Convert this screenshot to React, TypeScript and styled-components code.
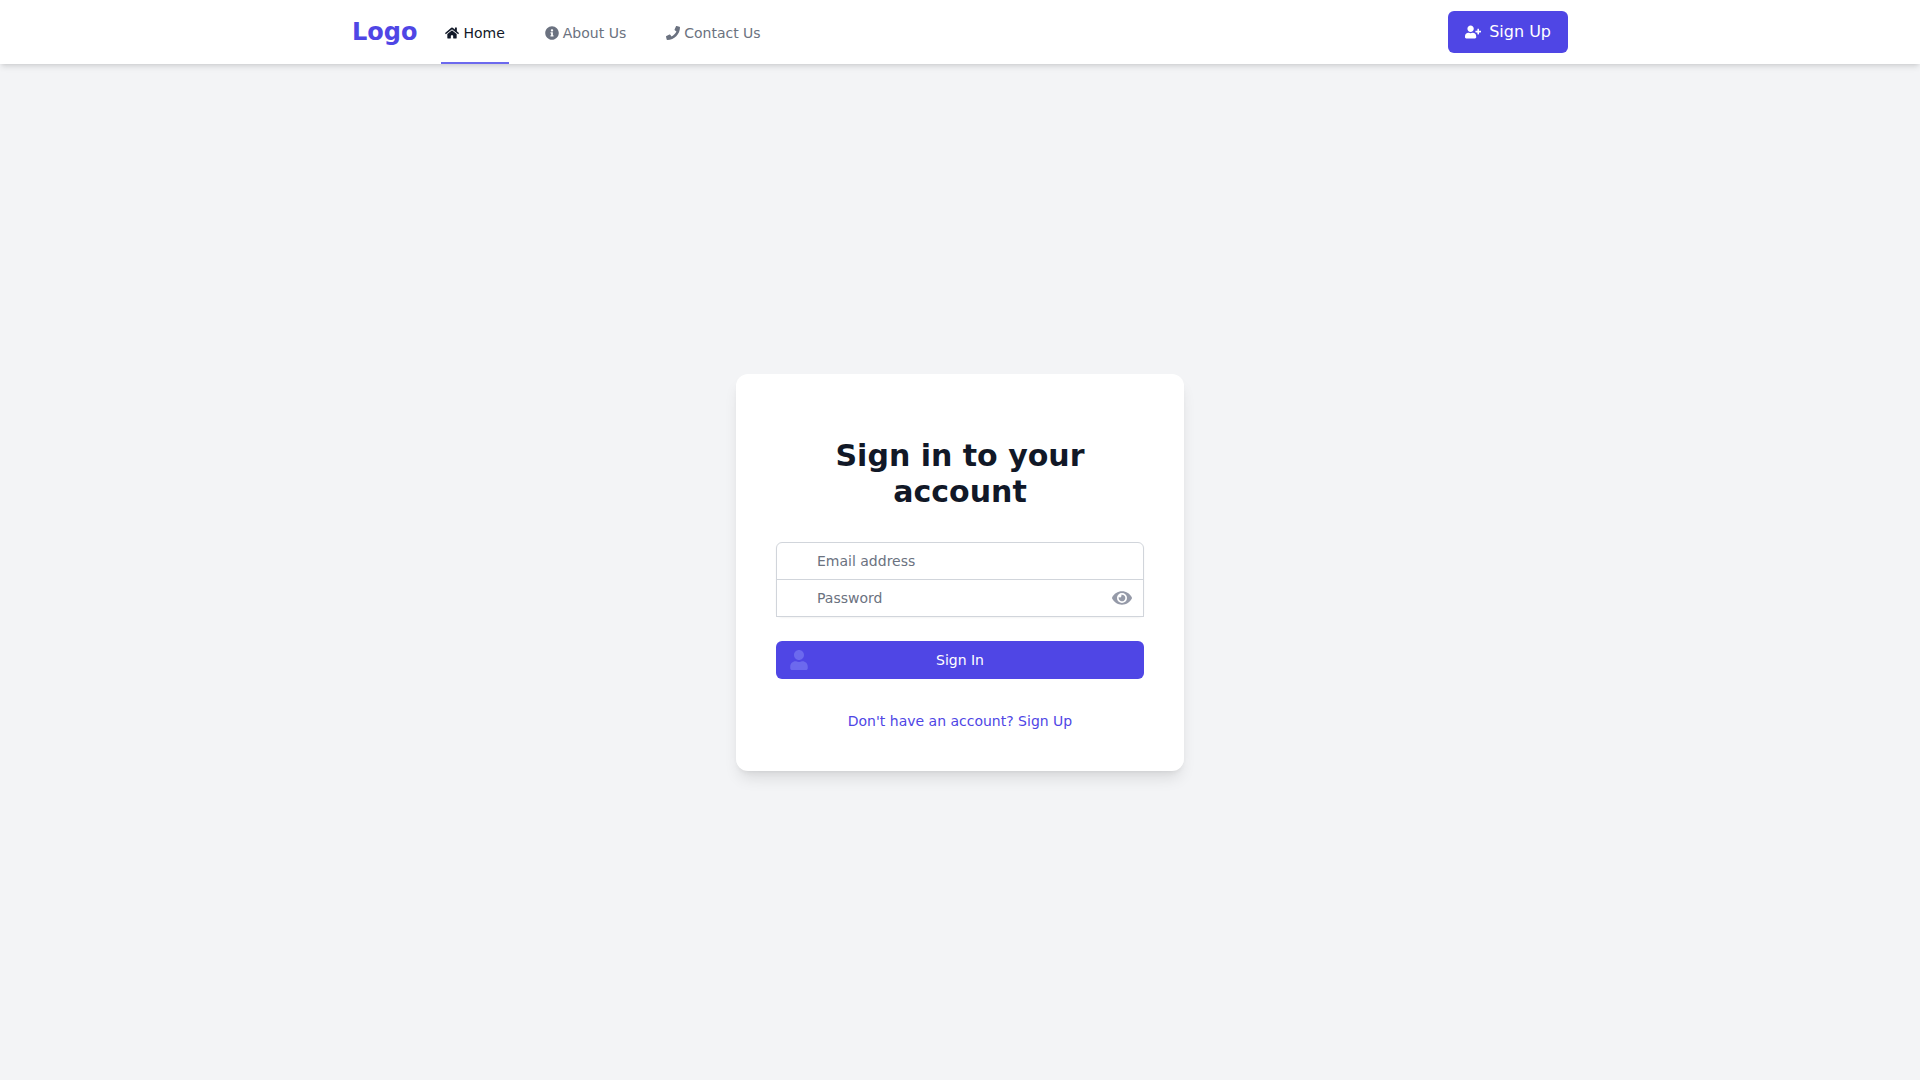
import React, { useState } from "react";
import styled, { createGlobalStyle } from "styled-components";
import { FaEye, FaEyeSlash, FaHome, FaInfoCircle, FaPhone, FaUser, FaUserPlus } from "react-icons/fa";

const GlobalStyle = createGlobalStyle`
  *, *::before, *::after { box-sizing: border-box; }
  body {
    margin: 0;
    background: #f3f4f6;
    font-family: "DejaVu Sans", sans-serif;
    line-height: 24px;
    color: #111827;
  }
  a { text-decoration: none; }
  button, input { font-family: inherit; margin: 0; }
  svg { display: block; flex-shrink: 0; }
`;

const Page = styled.div`
  min-height: 100vh;
  display: flex;
  flex-direction: column;
`;

const NavBar = styled.nav`
  background: #fff;
  box-shadow: 0 4px 6px -1px rgba(0, 0, 0, 0.1), 0 2px 4px -2px rgba(0, 0, 0, 0.1);
`;

const NavInner = styled.div`
  max-width: 1280px;
  height: 64px;
  margin: 0 auto;
  padding: 0 32px;
  display: flex;
  justify-content: space-between;
  align-items: center;
`;

const NavStart = styled.div`
  display: flex;
  align-items: center;
  align-self: stretch;
  gap: 24px;
`;

const Logo = styled.a`
  font-size: 24px;
  line-height: 32px;
  font-weight: 700;
  color: #4f46e5;
`;

const NavLinks = styled.div`
  display: flex;
  align-self: stretch;
  gap: 32px;
`;

const NavLink = styled.a<{ $active?: boolean }>`
  display: inline-flex;
  align-items: center;
  gap: 4px;
  padding: 4px 4px 0;
  border-bottom: 2px solid ${(p) => (p.$active ? "#6c69ee" : "transparent")};
  font-size: 14px;
  line-height: 20px;
  font-weight: 500;
  color: ${(p) => (p.$active ? "#111827" : "#6b7280")};
`;

const SignUpButton = styled.button`
  display: inline-flex;
  align-items: center;
  gap: 8px;
  padding: 8px 16px;
  border: 1px solid transparent;
  border-radius: 6px;
  background: #4f46e5;
  color: #fff;
  font-size: 16px;
  line-height: 24px;
  cursor: pointer;
`;

const Main = styled.main`
  flex: 1;
  display: flex;
  align-items: center;
  justify-content: center;
  padding-top: 1px;
`;

const Card = styled.section`
  width: 100%;
  max-width: 448px;
  padding: 40px;
  background: #fff;
  border-radius: 12px;
  box-shadow: 0 10px 15px -3px rgba(0, 0, 0, 0.1), 0 4px 6px -4px rgba(0, 0, 0, 0.1);
`;

const Title = styled.h2`
  margin: 24px 0 32px;
  font-size: 30px;
  line-height: 36px;
  font-weight: 800;
  text-align: center;
`;

const Form = styled.form`
  display: flex;
  flex-direction: column;
  gap: 24px;
`;

const Fields = styled.div`
  border-radius: 6px;
  box-shadow: 0 1px 2px 0 rgba(0, 0, 0, 0.05);
`;

const Field = styled.div`
  position: relative;
  & + & { margin-top: -1px; }
`;

const Input = styled.input<{ $first?: boolean }>`
  display: block;
  width: 100%;
  padding: 8px 40px;
  border: 1px solid #d1d5db;
  border-radius: ${(p) => (p.$first ? "6px 6px 0 0" : "0")};
  background: #fff;
  color: #111827;
  font-size: 14px;
  line-height: 20px;
  height: 38px;
  &::placeholder { color: #6b7280; opacity: 1; }
  &:focus { outline: none; border-color: #6366f1; }
`;

const RevealButton = styled.button`
  position: absolute;
  top: 0;
  bottom: 0;
  right: 0;
  display: flex;
  align-items: center;
  padding: 0 12px;
  border: 0;
  background: none;
  color: #959aa8;
  font-size: 20px;
  cursor: pointer;
`;

const SubmitButton = styled.button`
  position: relative;
  width: 100%;
  padding: 8px 16px;
  border: 1px solid transparent;
  border-radius: 6px;
  background: #4f46e5;
  color: #fff;
  font-size: 14px;
  line-height: 20px;
  font-weight: 500;
  cursor: pointer;
`;

const SubmitIcon = styled.span`
  position: absolute;
  top: 0;
  bottom: 0;
  left: 0;
  display: flex;
  align-items: center;
  padding-left: 12px;
  color: #6c69ee;
  font-size: 20px;
`;

const Footer = styled.div`
  margin-top: 32px;
  font-size: 14px;
  line-height: 20px;
  text-align: center;
`;

const FooterLink = styled.a`
  font-weight: 500;
  color: #4f46e5;
`;

export default function App() {
  const [visible, setVisible] = useState(false);

  return (
    <Page>
      <GlobalStyle />
      <NavBar>
        <NavInner>
          <NavStart>
            <Logo href="#">Logo</Logo>
            <NavLinks>
              <NavLink href="#" $active><FaHome />Home</NavLink>
              <NavLink href="#about"><FaInfoCircle />About Us</NavLink>
              <NavLink href="#contact"><FaPhone />Contact Us</NavLink>
            </NavLinks>
          </NavStart>
          <SignUpButton type="button"><FaUserPlus />Sign Up</SignUpButton>
        </NavInner>
      </NavBar>
      <Main>
        <Card>
          <Title>Sign in to your account</Title>
          <Form onSubmit={(e) => e.preventDefault()}>
            <Fields>
              <Field>
                <Input
                  type="email"
                  aria-label="Email address"
                  autoComplete="email"
                  placeholder="Email address"
                  $first
                />
              </Field>
              <Field>
                <Input
                  type={visible ? "text" : "password"}
                  aria-label="Password"
                  autoComplete="current-password"
                  placeholder="Password"
                />
                <RevealButton
                  type="button"
                  aria-label={visible ? "Hide password" : "Show password"}
                  onClick={() => setVisible(!visible)}
                >
                  {visible ? <FaEyeSlash /> : <FaEye />}
                </RevealButton>
              </Field>
            </Fields>
            <SubmitButton type="submit">
              <SubmitIcon><FaUser /></SubmitIcon>
              Sign In
            </SubmitButton>
          </Form>
          <Footer>
            <FooterLink href="#signup">Don't have an account? Sign Up</FooterLink>
          </Footer>
        </Card>
      </Main>
    </Page>
  );
}
